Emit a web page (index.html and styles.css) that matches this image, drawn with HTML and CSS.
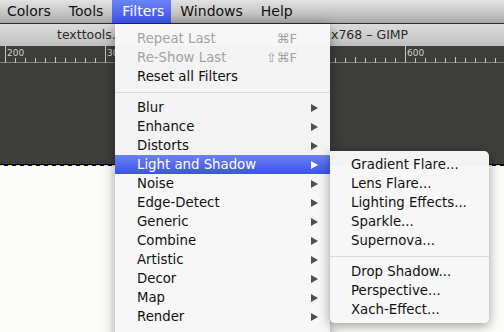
FILE: index.html
```html
<!DOCTYPE html>
<html>
<head>
<meta charset="utf-8">
<link rel="stylesheet" href="styles.css">
</head>
<body>
<div class="screen">
  <div class="menubar">
    <span class="mb-item first">Colors</span>
    <span class="mb-item">Tools</span>
    <span class="mb-item active">Filters</span>
    <span class="mb-item">Windows</span>
    <span class="mb-item">Help</span>
  </div>
  <div class="window">
    <div class="titlebar">
      <span class="t-left">texttools.</span>
      <span class="t-right">x768 – GIMP</span>
    </div>
    <svg class="ruler" width="504" height="17" viewBox="0 0 504 17">
      <rect width="504" height="17" fill="#3d3d3b"/>
      <line x1="0" y1="16.5" x2="504" y2="16.5" stroke="#7d7d7b" stroke-width="1"/>
      <g stroke="#c4c4c2" stroke-width="1">
        <line x1="15.5" y1="12" x2="15.5" y2="17"/><line x1="25.5" y1="12" x2="25.5" y2="17"/>
        <line x1="35.5" y1="12" x2="35.5" y2="17"/><line x1="45.5" y1="12" x2="45.5" y2="17"/>
        <line x1="55.5" y1="11" x2="55.5" y2="17"/><line x1="65.5" y1="12" x2="65.5" y2="17"/>
        <line x1="75.5" y1="12" x2="75.5" y2="17"/><line x1="85.5" y1="12" x2="85.5" y2="17"/>
        <line x1="95.5" y1="12" x2="95.5" y2="17"/>
        <line x1="335.5" y1="12" x2="335.5" y2="17"/><line x1="345.5" y1="12" x2="345.5" y2="17"/>
        <line x1="355.5" y1="11" x2="355.5" y2="17"/><line x1="365.5" y1="12" x2="365.5" y2="17"/>
        <line x1="375.5" y1="12" x2="375.5" y2="17"/><line x1="385.5" y1="12" x2="385.5" y2="17"/>
        <line x1="395.5" y1="12" x2="395.5" y2="17"/>
        <line x1="415.5" y1="12" x2="415.5" y2="17"/><line x1="425.5" y1="12" x2="425.5" y2="17"/>
        <line x1="435.5" y1="12" x2="435.5" y2="17"/><line x1="445.5" y1="12" x2="445.5" y2="17"/>
        <line x1="455.5" y1="11" x2="455.5" y2="17"/><line x1="465.5" y1="12" x2="465.5" y2="17"/>
        <line x1="475.5" y1="12" x2="475.5" y2="17"/><line x1="485.5" y1="12" x2="485.5" y2="17"/>
        <line x1="495.5" y1="12" x2="495.5" y2="17"/>
        <line x1="5.5" y1="0" x2="5.5" y2="17"/>
        <line x1="105.5" y1="0" x2="105.5" y2="17"/>
        <line x1="405.5" y1="0" x2="405.5" y2="17"/>
      </g>
      <g class="ruler-label" fill="#d0d0ce">
        <text x="7" y="10">200</text>
        <text x="107" y="10">300</text>
        <text x="407" y="10">600</text>
      </g>
    </svg>
    <div class="canvas-dark"></div>
    <div class="ants"></div>
    <div class="canvas-white"></div>
  </div>

  <div class="menu main-menu">
    <div class="mi disabled"><span>Repeat Last</span><span class="sc">⌘F</span></div>
    <div class="mi disabled"><span>Re-Show Last</span><span class="sc">⇧⌘F</span></div>
    <div class="mi"><span>Reset all Filters</span></div>
    <div class="sep"></div>
    <div class="mi"><span>Blur</span><i class="arrow"></i></div>
    <div class="mi"><span>Enhance</span><i class="arrow"></i></div>
    <div class="mi"><span>Distorts</span><i class="arrow"></i></div>
    <div class="mi hl"><span>Light and Shadow</span><i class="arrow"></i></div>
    <div class="mi"><span>Noise</span><i class="arrow"></i></div>
    <div class="mi"><span>Edge-Detect</span><i class="arrow"></i></div>
    <div class="mi"><span>Generic</span><i class="arrow"></i></div>
    <div class="mi"><span>Combine</span><i class="arrow"></i></div>
    <div class="mi"><span>Artistic</span><i class="arrow"></i></div>
    <div class="mi"><span>Decor</span><i class="arrow"></i></div>
    <div class="mi"><span>Map</span><i class="arrow"></i></div>
    <div class="mi"><span>Render</span><i class="arrow"></i></div>
  </div>

  <div class="menu sub-menu">
    <div class="mi"><span>Gradient Flare...</span></div>
    <div class="mi"><span>Lens Flare...</span></div>
    <div class="mi"><span>Lighting Effects...</span></div>
    <div class="mi"><span>Sparkle...</span></div>
    <div class="mi"><span>Supernova...</span></div>
    <div class="sep"></div>
    <div class="mi"><span>Drop Shadow...</span></div>
    <div class="mi"><span>Perspective...</span></div>
    <div class="mi"><span>Xach-Effect...</span></div>
  </div>
</div>
</body>
</html>
```

FILE: styles.css
```css
* { box-sizing: border-box; }
html, body { margin: 0; padding: 0; }
body {
  width: 504px;
  height: 332px;
  overflow: hidden;
  font-family: "DejaVu Sans", "Liberation Sans", sans-serif;
  background: #fcfcfa;
}
.screen {
  position: relative;
  width: 504px;
  height: 332px;
  overflow: hidden;
}
.menubar {
  display: flex;
  height: 24px;
  background: linear-gradient(#e2e2e2, #c6c6c6 55%, #a8a8a8);
  border-bottom: 1px solid #2e2e2e;
  font-size: 14px;
  line-height: 23px;
  color: #111;
}
.mb-item { padding: 0 9px; }
.mb-item.first { padding-left: 7px; }
.mb-item.active {
  padding: 0 7px 0 10px;
  color: #fff;
  background: linear-gradient(#6c82f6, #3c52e9);
}
.titlebar {
  display: grid;
  grid-template-columns: 57px 274px auto;
  height: 22px;
  background: linear-gradient(#dcdcdc, #c0c0c0);
  font-size: 12.5px;
  line-height: 22px;
  color: #2a2a2a;
  white-space: nowrap;
}
.t-left { grid-column: 2; }
.t-right { grid-column: 3; }
.ruler { display: block; }
.ruler-label { font-family: "DejaVu Sans", sans-serif; font-size: 9px; }
.canvas-dark {
  height: 101px;
  background: #3d3d3b;
}
.ants {
  height: 2px;
  background: repeating-linear-gradient(90deg, #e8e22a 0 4px, #000 4px 8px);
  border-top: 1px solid #000;
}
.canvas-white {
  height: 200px;
  background: #fcfcfa;
}

.menu {
  position: absolute;
  background: rgba(247, 247, 247, 0.98);
  font-size: 13.3px;
  color: #111;
  box-shadow: 0 3px 12px rgba(0, 0, 0, 0.38);
}
.main-menu {
  left: 115px;
  top: 24px;
  width: 215px;
  height: 320px;
  padding-top: 5px;
}
.sub-menu {
  left: 330px;
  top: 151px;
  width: 159px;
  padding: 4px 0;
  border-radius: 0 5px 5px 5px;
}
.mi {
  display: flex;
  align-items: center;
  justify-content: space-between;
  height: 19px;
  line-height: 19px;
  padding: 0 12px 0 22px;
  white-space: nowrap;
}
.sub-menu .mi { padding-left: 21px; }
.mi.disabled { color: #a2a2a2; }
.mi .sc { padding-right: 21px; font-size: 13px; }
.mi.hl {
  color: #fff;
  background: linear-gradient(#6b81f6, #3c53ea);
}
.arrow {
  display: block;
  width: 0;
  height: 0;
  border-left: 7px solid #4e4e4e;
  border-top: 4.5px solid transparent;
  border-bottom: 4.5px solid transparent;
}
.mi.hl .arrow { border-left-color: #fff; }
.sep {
  height: 12px;
  position: relative;
}
.sep::after {
  content: "";
  position: absolute;
  left: 0;
  right: 0;
  top: 6px;
  height: 1px;
  background: #dadada;
}
```
